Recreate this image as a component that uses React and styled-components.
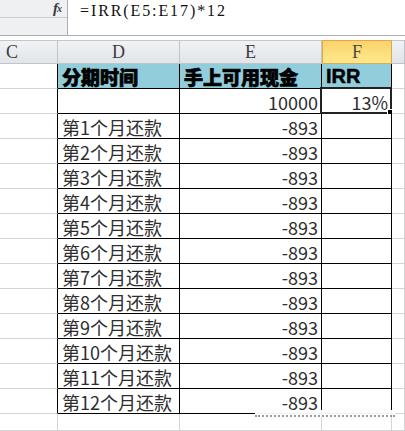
import React from "react";
import styled, { createGlobalStyle, css } from "styled-components";

const GlobalStyle = createGlobalStyle`
  html, body {
    margin: 0;
    padding: 0;
    background: #ffffff;
    overflow: hidden;
  }
  body {
    width: 405px;
    height: 431px;
  }
`;

const GRID = "#d4d4d4";
const INK = "#000000";
const CJK = `"Noto Sans CJK SC", "Noto Sans", sans-serif`;

const Page = styled.div`
  position: relative;
  width: 405px;
  height: 431px;
  overflow: hidden;
  display: flex;
  flex-direction: column;
`;

const FormulaBar = styled.div`
  display: flex;
  height: 36px;
  box-sizing: border-box;
  border-bottom: 1px solid #a9aeb5;
`;

const NameArea = styled.div`
  width: 68px;
  box-sizing: border-box;
  background: #eef0f2;
  border-right: 1px solid #a9aeb5;
  display: flex;
  flex-direction: column;
`;

const FxRow = styled.div`
  height: 18px;
  box-sizing: border-box;
  border-bottom: 1px solid #c9cdd2;
  display: flex;
  align-items: center;
  justify-content: flex-end;
  padding-right: 6px;
  font-family: "Liberation Serif", serif;
  font-style: italic;
  font-weight: bold;
  font-size: 15px;
  color: #3a3a3a;
  letter-spacing: -1px;
  sub {
    font-size: 10px;
    vertical-align: -1px;
  }
`;

const FormulaText = styled.div`
  flex: 1;
  padding: 1px 0 0 12px;
  font-family: "Liberation Serif", serif;
  font-size: 16px;
  line-height: 19px;
  letter-spacing: 1.9px;
  color: #111;
  background: #fff;
`;

const Gap = styled.div`
  height: 4px;
  background: #fff;
`;

const Sheet = styled.div`
  display: grid;
  grid-template-columns: 58px 122px 142px 70px 1fr;
  grid-template-rows: 24px repeat(14, 25px) 1fr;
  flex: 1;
`;

const ColHead = styled.div`
  box-sizing: border-box;
  display: flex;
  align-items: center;
  justify-content: ${(p) => (p.$left ? "flex-start" : "center")};
  padding-left: ${(p) => (p.$left ? "6px" : "0")};
  font-family: "Liberation Serif", serif;
  font-size: 18px;
  color: #3c3c3c;
  border-top: 1px solid #c3c8ce;
  border-right: 1px solid #bfc4ca;
  border-bottom: 1px solid #bfc4ca;
  background: linear-gradient(#f1f3f5, #e1e4e8);
  ${(p) =>
    p.$active &&
    css`
      background: linear-gradient(#f9d36a, #fee98e);
      border: 1px solid #e2a94a;
      color: #4a4a4a;
    `}
`;

const Cell = styled.div`
  position: relative;
  box-sizing: border-box;
  display: flex;
  align-items: center;
  justify-content: ${(p) => (p.$align === "right" ? "flex-end" : "flex-start")};
  padding: 1px 3px 0 4px;
  border-right: 1px solid ${(p) => p.$rc || GRID};
  border-bottom: 1px solid ${(p) => p.$bc || GRID};
  background: ${(p) => p.$bg || "#fff"};
  font-family: ${CJK};
  font-size: 18px;
  font-weight: 400;
  color: #2e2e2e;
  white-space: nowrap;
  ${(p) =>
    p.$bold &&
    css`
      font-size: 19px;
      font-weight: 900;
      color: #000;
      -webkit-text-stroke: 0.7px #000;
    `}
  ${(p) =>
    p.$latin &&
    css`
      font-family: "Liberation Sans", Arial, sans-serif;
      font-size: 20px;
      -webkit-text-stroke: 0.5px #000;
    `}
`;

const Selection = styled.div`
  position: absolute;
  left: -2px;
  top: -2px;
  right: -1px;
  bottom: -1px;
  border: 2px solid #222;
  pointer-events: none;
`;

const FillHandle = styled.div`
  position: absolute;
  right: -4px;
  bottom: -4px;
  width: 5px;
  height: 5px;
  background: #000;
  border: 1px solid #fff;
`;

const Watermark = styled.div`
  position: absolute;
  left: 255px;
  top: 410px;
  width: 140px;
  height: 5px;
  background: rgba(255, 255, 255, 0.95);
  border-bottom: 2px dotted #9a9a9a;
`;

const rows = [
  { d: "", e: "10000", f: "13%" },
  ...Array.from({ length: 12 }, (_, i) => ({
    d: `第${i + 1}个月还款`,
    e: "-893",
    f: "",
  })),
];

const App = () => {
  return (
    <Page>
      <GlobalStyle />
      <FormulaBar>
        <NameArea>
          <FxRow>
            f<sub>x</sub>
          </FxRow>
        </NameArea>
        <FormulaText>=IRR(E5:E17)*12</FormulaText>
      </FormulaBar>
      <Gap />
      <Sheet>
        <ColHead $left>C</ColHead>
        <ColHead>D</ColHead>
        <ColHead>E</ColHead>
        <ColHead $active>F</ColHead>
        <ColHead />

        <Cell $rc={INK} />
        <Cell $bg="#92cddc" $rc={INK} $bc={INK} $bold>
          分期时间
        </Cell>
        <Cell $bg="#92cddc" $rc={INK} $bc={INK} $bold>
          手上可用现金
        </Cell>
        <Cell $bg="#92cddc" $rc={INK} $bc={INK} $bold $latin>
          IRR
        </Cell>
        <Cell />

        {rows.map((r, i) => (
          <React.Fragment key={i}>
            <Cell $rc={INK} />
            <Cell $rc={INK} $bc={INK}>
              {r.d}
            </Cell>
            <Cell $rc={INK} $bc={INK} $align="right">
              {r.e}
            </Cell>
            <Cell $rc={INK} $bc={INK} $align="right">
              {r.f}
              {i === 0 && (
                <Selection>
                  <FillHandle />
                </Selection>
              )}
            </Cell>
            <Cell />
          </React.Fragment>
        ))}

        <Cell />
        <Cell />
        <Cell />
        <Cell />
        <Cell />
      </Sheet>
      <Watermark />
    </Page>
  );
};

export default App;
